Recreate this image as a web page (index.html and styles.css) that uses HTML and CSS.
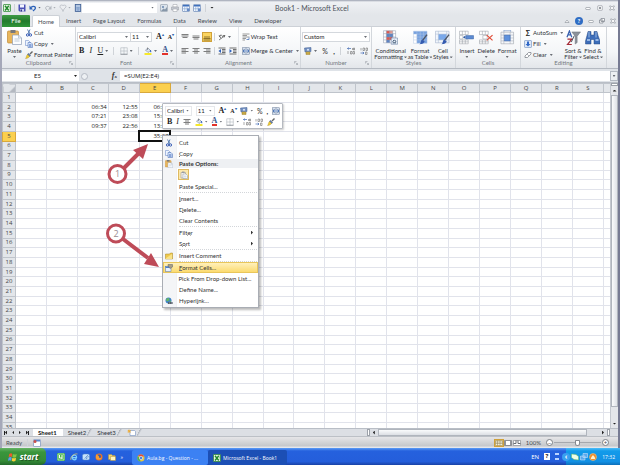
FILE: index.html
```html
<!DOCTYPE html>
<html lang="en">
<head>
<meta charset="utf-8">
<title>Book1 - Microsoft Excel</title>
<link rel="stylesheet" href="styles.css">
</head>
<body>
<svg class="sprite" aria-hidden="true">
  <defs>
    <symbol id="excel" viewBox="0 0 16 16"><rect x="1" y="1" width="14" height="14" rx="1" fill="#e9f5e6" stroke="#2f8b35" stroke-width="1.500"/><path d="M4 3.500L11.500 13M11.500 3.500L4 13" stroke="#218a2b" stroke-width="2.800"/><path d="M12 4h2M12 7h2M12 10h2" stroke="#58a65c"/></symbol>
    <symbol id="save" viewBox="0 0 16 16"><path d="M1 1h14v14H3l-2-2z" fill="#4a50b5"/><path d="M4 1h8v6H4z" fill="#f3f5ff"/><path d="M4 10h8v5H4z" fill="#c9cfee"/><path d="M5 11h3v4H5z" fill="#30368c"/></symbol>
    <symbol id="undo" viewBox="0 0 16 16"><path d="M4 7c5-5 11-1 8 3-1 2-3 3-4 4" fill="none" stroke="#2d62b8" stroke-width="2.600"/><path d="M1 3v8h7z" fill="#2d62b8"/></symbol>
    <symbol id="redo" viewBox="0 0 16 16"><path d="M12 7C7 2 1 6 4 10c1 2 3 3 4 4" fill="none" stroke="#b5bac1" stroke-width="2"/><path d="M15 3v8H8z" fill="#b5bac1"/></symbol>
    <symbol id="shape" viewBox="0 0 16 16"><path d="M2 5c0-3 3-4 6-2 4-2 7 0 6 3-1 2-3 2-4 4l-2 5-2-5C4 9 2 8 2 5z" fill="#eceef1" stroke="#b5bac1" stroke-width="1.500"/></symbol>
    <symbol id="calc" viewBox="0 0 16 16"><rect x="2.500" y="1" width="11" height="14" fill="#7d9cc9" stroke="#3c5c91" stroke-width="1.500"/><path d="M4 3h8v2H4z" fill="#e9f1fb"/><path d="M4 8h8M4 10.500h8M4 13h8" stroke="#d6e3f5" stroke-dasharray="2 1"/></symbol>
    <symbol id="printer" viewBox="0 0 16 16"><path d="M4 1h8v5H4z" fill="#fff" stroke="#989da5"/><path d="M1 6h14v6H1z" fill="#c3c8cf" stroke="#989da5"/><path d="M4 10h8v5H4z" fill="#fff" stroke="#989da5"/></symbol>
    <symbol id="picture" viewBox="0 0 16 16"><rect x="1.500" y="1.500" width="13" height="13" fill="#dbe3ec" stroke="#7b8898"/><circle cx="6" cy="6" r="2" fill="#6685ad"/><path d="M2 14l5-5 3 2 4-5v8z" fill="#8697a9"/></symbol>
    <symbol id="sheetblue" viewBox="0 0 16 16"><rect x="1.500" y="1.500" width="13" height="13" fill="#f3f8ff" stroke="#3c64a4"/><path d="M2 2h12v3H2z" fill="#3f71bd"/><path d="M5.500 5v9M10 5v9M2 9.500h12" stroke="#7296ca"/><path d="M10 9h5v5h-5z" fill="#668bc5"/></symbol>
    <symbol id="macro" viewBox="0 0 16 16"><rect x="1.500" y="1.500" width="13" height="13" fill="#fff" stroke="#5d7fb9"/><path d="M2 2h12v3H2z" fill="#5b86cb"/><circle cx="4" cy="5" r="3" fill="#c9504a"/></symbol>
    <symbol id="paste" viewBox="1 1 14 15"><rect x="1" y="2" width="11" height="12" rx="1" fill="#e9b65c" stroke="#c08937" stroke-width=".7"/><path d="M4 1h5v3H4z" fill="#77797d"/><path d="M6 6h6l3 3v6.500H6z" fill="#fbfdff" stroke="#8c9cb5" stroke-width=".7"/><path d="M12 6v3h3M8 10h5M8 12h5" fill="none" stroke="#a7b6c9" stroke-width=".7"/></symbol>
    <symbol id="pasteplain" viewBox="0 0 16 16"><path d="M2 3h9v11H2z" fill="#f3f0e6" stroke="#8d8f94"/><path d="M4 1h5v3H4z" fill="#9a9ca1"/><path d="M6 6h6l3 3v6H6z" fill="#fff" stroke="#8191a8"/><path d="M8 10h5M8 12h5" stroke="#9fb0c6"/></symbol>
    <symbol id="cut" viewBox="0 0 16 16"><path d="M5 1l5 9M10 1L6 10" stroke="#426da8" stroke-width="1.700"/><circle cx="5" cy="12" r="2.300" fill="none" stroke="#284fb0" stroke-width="1.800"/><circle cx="11" cy="12" r="2.300" fill="none" stroke="#284fb0" stroke-width="1.800"/></symbol>
    <symbol id="copy" viewBox="0 0 16 16"><path d="M1 1h6l3 3v7H1z" fill="#edf4ff" stroke="#5b7fc0"/><path d="M6 5h6l3 3v7H6z" fill="#d5e4fb" stroke="#3961ae"/><path d="M8 9h5M8 11h5M8 13h5" stroke="#3c66b5"/></symbol>
    <symbol id="brush" viewBox="0 0 16 16"><path d="M15 1l-5 5" stroke="#666" stroke-width="2.800"/><path d="M7 4l5 5-3 3-5-5z" fill="#637aa0"/><path d="M5 7l4 4c-2 3-5 4-8 4 2-2 1-5 4-8z" fill="#edcb32" stroke="#a5882b" stroke-width=".7"/></symbol>
    <symbol id="borders" viewBox="0 0 16 16"><path d="M1.500 1.500h13v13h-13zM8 1v14M1 8h14" fill="none" stroke="#a2a8b0"/><path d="M1 14.500h14" stroke="#5c6068"/></symbol>
    <symbol id="fill" viewBox="0 0 16 16"><path d="M3 6l5-4 5 5-5 4z" fill="#dae3ef" stroke="#5c6b81"/><path d="M12 6c3 0 3 3 2 5-2-1-2-3-2-5z" fill="#2d5fb7"/><path d="M7 1v5" stroke="#555"/><path d="M1 12h14v4H1z" fill="#f6e82b"/></symbol>
    <symbol id="left" viewBox="0 0 16 16"><path d="M1 3h14M1 6h9M1 9h14M1 12h9" stroke="#555" stroke-width="1.500"/></symbol>
    <symbol id="center" viewBox="0 0 16 16"><path d="M1 3h14M4 6h8M1 9h14M4 12h8" stroke="#555" stroke-width="1.500"/></symbol>
    <symbol id="right" viewBox="0 0 16 16"><path d="M1 3h14M6 6h9M1 9h14M6 12h9" stroke="#555" stroke-width="1.500"/></symbol>
    <symbol id="top" viewBox="0 0 16 16"><path d="M1 3h14M1 6h14M3 9h10" stroke="#555" stroke-width="1.500"/></symbol>
    <symbol id="middle" viewBox="0 0 16 16"><path d="M1 6h14M1 9h14M3 12h10" stroke="#555" stroke-width="1.500"/></symbol>
    <symbol id="bottom" viewBox="0 0 16 16"><path d="M2 8h12M1 11h14M1 14h14" stroke="#6b5318" stroke-width="1.500"/></symbol>
    <symbol id="orient" viewBox="0 0 16 16"><path d="M2 14L14 5M14 5h-4M14 5l-2 4" stroke="#555" stroke-width="1.500"/><path d="M2 4l4 7M2 8l4-4M6 3l4 5" stroke="#555" stroke-width="1.500"/></symbol>
    <symbol id="outdent" viewBox="0 0 16 16"><path d="M1 2h14M8 5h7M8 8h7M8 11h7M1 14h14" stroke="#444" stroke-width="1.500"/><path d="M6 4v8L1 8z" fill="#2f62bd"/></symbol>
    <symbol id="indent" viewBox="0 0 16 16"><path d="M1 2h14M8 5h7M8 8h7M8 11h7M1 14h14" stroke="#444" stroke-width="1.500"/><path d="M1 4v8l5-4z" fill="#2f62bd"/></symbol>
    <symbol id="wrap" viewBox="0 0 16 16"><path d="M1 2h14M1 5h9M1 8h14M1 11h7M1 14h5" stroke="#666" stroke-width="1.300"/><path d="M14 9v4H9" fill="none" stroke="#3d6ebb" stroke-width="1.500"/></symbol>
    <symbol id="merge" viewBox="0 0 16 16"><rect x="1" y="1.500" width="14" height="13" fill="#e8f0fa" stroke="#627793"/><path d="M1 4.500h14M1 11.500h14M8 1v3M8 12v3" stroke="#627793"/><path d="M2 8h12M5 5.500L2 8l3 2.500M11 5.500L14 8l-3 2.500" stroke="#305fa9" fill="none" stroke-width="1.500"/></symbol>
    <symbol id="money" viewBox="0 0 16 16"><path d="M1 2l13-1v8L2 10z" fill="#7592c3" stroke="#38598f"/><circle cx="8" cy="5.500" r="2" fill="#dce8fa"/><path d="M4 10h8v5H4z" fill="#dfc35b" stroke="#987b27"/><path d="M4 12.500h8" stroke="#987b27"/></symbol>
    <symbol id="decup" viewBox="0 0 16 16"><path d="M8 3H1M3.500 1L1 3l2.500 2" fill="none" stroke="#315fae" stroke-width="1.300"/><path d="M2 8v6M11 2v4M7 9h3v5H7zM12 9h3v5h-3zM13 2h2v4h-2z" fill="none" stroke="#555"/></symbol>
    <symbol id="decdown" viewBox="0 0 16 16"><path d="M1 12h7M5.500 10L8 12l-2.500 2" fill="none" stroke="#315fae" stroke-width="1.300"/><path d="M2 2v5M6 2h3v5H6zM12 2h3v5h-3zM11 10h3v5h-3z" fill="none" stroke="#555"/></symbol>
    <symbol id="cond" viewBox="1 0 31 30"><path d="M2 1h25v25H2z" fill="#fff"/><path d="M8 1h7v6H8zM8 14h12v6H8z" fill="#dd5a52"/><path d="M8 7h14v7H8zM8 20h7v6H8z" fill="#5c83c4"/><path d="M15 1h6v6h-6z" fill="#e59a91"/><path d="M2 1h25v25H2zM8 1v25M15 1v25M21 1v25M2 7h25M2 14h25M2 20h25" fill="none" stroke="#8994aa"/><path d="M18 16h13v13H18z" fill="#e7eff9" stroke="#536d96"/><path d="M21 24l3-4M21 26h7M25 20l3 4" stroke="#304966" stroke-width="2"/></symbol>
    <symbol id="ftable" viewBox="1 0 31 30"><path d="M2 2h28v25H2z" fill="#fff"/><path d="M2 2h28v6H2zM9 8h21v19H9z" fill="#76a1df"/><path d="M2 2h28v25H2zM9 2v25M16 2v25M23 2v25M2 8h28M2 14h28M2 20h28" fill="none" stroke="#b3c6e3"/><path d="M30 9L20 22" stroke="#4d5563" stroke-width="3"/><path d="M20 19l5 4c-2 6-7 6-11 6 4-2 2-7 6-10z" fill="#345bb0"/></symbol>
    <symbol id="cstyle" viewBox="1 0 31 30"><path d="M2 2h28v24H2z" fill="#f2f6fc" stroke="#91a4c2"/><path d="M8 8h17v12H8z" fill="#79a8ea"/><path d="M2 8h28M2 20h28M8 2v24M25 2v24" stroke="#a8b7cf"/><path d="M30 9L20 22" stroke="#4d5563" stroke-width="3"/><path d="M20 19l5 4c-2 6-7 6-11 6 4-2 2-7 6-10z" fill="#345bb0"/></symbol>
    <symbol id="insert" viewBox="1 0 31 30"><path d="M2 2h18v7H2zM2 20h18v8H2zM8 2v7M14 2v7M8 20v8M14 20v8M2 24h18M2 11h7v7H2z" fill="#fff" stroke="#8c929b"/><path d="M15 11h16v7H15z" fill="#5c8bd2" stroke="#315ca1"/><path d="M9 14.500l5-3v6z" fill="#315ca1"/></symbol>
    <symbol id="delete" viewBox="1 0 31 30"><path d="M2 2h18v7H2zM2 20h18v8H2zM8 2v7M14 2v7M8 20v8M14 20v8M2 24h18M9 11h9v7H9z" fill="#fff" stroke="#8c929b"/><path d="M17 10l12 11M29 10L17 21" stroke="#e04b36" stroke-width="2.500"/></symbol>
    <symbol id="format" viewBox="1 0 31 30"><path d="M3 4h26v24H3z" fill="#f5f7fa" stroke="#8c929b"/><path d="M9 4v24M22 4v24M3 10h26M3 22h26M3 16h26" stroke="#9aa4b2"/><path d="M10 10h12v12H10z" fill="#5e91dd" stroke="#315ca1"/><path d="M9 1h14M9 0v3M23 0v3" stroke="#436fae"/></symbol>
    <symbol id="filldown" viewBox="0 0 16 16"><rect x="1.500" y="1.500" width="13" height="13" fill="#dce8f9" stroke="#5076b1"/><path d="M6 3h4v5h3l-5 5-5-5h3z" fill="#2e66c6"/></symbol>
    <symbol id="eraser" viewBox="0 0 16 16"><path d="M2 10l7-7h5v3l-7 7H2z" fill="#fff" stroke="#686d77" stroke-width="1.300"/><path d="M6 6l4 4" stroke="#686d77"/></symbol>
    <symbol id="sort" viewBox="1 0 31 31"><path d="M3 15L8 2l5 13M5 10h6" fill="none" stroke="#365fae" stroke-width="2.500"/><path d="M4 19h9L4 30h9" fill="none" stroke="#a52b36" stroke-width="2.500"/><path d="M13 4h18l-7 9v13l-4 3V13z" fill="#8c929b" stroke="#656c76"/><path d="M18 12L12 25" stroke="#4b525e" stroke-width="2"/></symbol>
    <symbol id="find" viewBox="1 1 30 30"><path d="M7 4h6v7h6V4h6l2 8 4 11v6H19v-9h-6v9H2v-6l3-11z" fill="#3d6db9" stroke="#264983"/><path d="M5 21h6M22 21h6" stroke="#b6d1f2" stroke-width="3"/><path d="M9 5v11M23 5v11" stroke="#9bbce6" stroke-width="2"/></symbol>
    <symbol id="launch" viewBox="0 0 8 8"><path d="M1 5V1h4M3 3l4 4M7 4v3H4" fill="none" stroke="#8c929a"/></symbol>
    <symbol id="min" viewBox="0 0 12 12"><rect x="1.500" y="5" width="9" height="4" rx="1" fill="#fff" stroke="#737983"/></symbol>
    <symbol id="max" viewBox="0 0 12 12"><rect x="1.500" y="1.500" width="9" height="9" rx="1" fill="#fff" stroke="#737983"/><rect x="4.500" y="4.500" width="3" height="3" fill="none" stroke="#737983"/></symbol>
    <symbol id="restore" viewBox="0 0 12 12"><path d="M4 1h7v6H4zM1 4h7v6H1z" fill="#fff" stroke="#737983" stroke-width="1.300"/></symbol>
    <symbol id="close" viewBox="0 0 12 12"><path d="M1 2h3l2 2 2-2h3L8 6l3 4H8L6 8l-2 2H1l3-4z" fill="#fff" stroke="#737983"/></symbol>
    <symbol id="note" viewBox="0 0 16 16"><path d="M1 4h8l2-2h4v12H1z" fill="#efc94c" stroke="#a78524"/><path d="M1 13l13-9v10H1z" fill="#f8e288"/></symbol>
    <symbol id="newsheet" viewBox="0 0 18 14"><path d="M6 3h9l2 2v8H6z" fill="#fff" stroke="#5c7fb6"/><path d="M4 1v7M1 4h7M2 2l5 5M7 2L2 7" stroke="#eea82c" stroke-width="1.500"/></symbol>
    <symbol id="cells" viewBox="0 0 16 16"><rect x="1" y="5" width="11" height="10" fill="#e8f1ff" stroke="#4a6fa8"/><path d="M1 5h11v3H1z" fill="#4d80cb"/><path d="M6 1h9v5l-5 3-4-5z" fill="#a89f86" stroke="#59616d"/></symbol>
    <symbol id="globe" viewBox="0 0 16 16"><circle cx="7" cy="7" r="6" fill="#3e82c9"/><path d="M3 3l5-1 1 4-4 3-3-2zM9 8l3-1-1 5z" fill="#65b665"/><path d="M6 12h9" stroke="#39424e" stroke-width="4"/><path d="M7 12h3M11 12h3" stroke="#dce2e8" stroke-width="1.500"/></symbol>
    <symbol id="windows" viewBox="0 0 16 16"><path d="M2 3q3-2 5 0L6 8q-2-2-5 0z" fill="#ef5b2b"/><path d="M8 3q3 2 6 0l-1 5q-3 2-6 0z" fill="#82c645"/><path d="M1 9q3-2 5 0l-1 5q-2-2-5 0z" fill="#5b9cf1"/><path d="M7 9q3 2 6 0l-1 5q-3 2-6 0z" fill="#fad036"/></symbol>
    <symbol id="green" viewBox="0 0 16 16"><rect width="16" height="16" rx="2" fill="#45b449"/><path d="M2 2h12v12H2z" fill="none" stroke="#fff"/><path d="M5 4v6h5M10 4v8" fill="none" stroke="#fff" stroke-width="2"/></symbol>
    <symbol id="ie" viewBox="0 0 16 16"><path d="M13 11c-5 6-11 0-8-5 3-4 9-1 8 3H5" fill="none" stroke="#7fd0ff" stroke-width="2.500"/><path d="M2 14C-1 9 8 0 15 2" fill="none" stroke="#f4d75d" stroke-width="1.300"/></symbol>
    <symbol id="desktop" viewBox="0 0 16 16"><rect x="1" y="2" width="14" height="12" rx="3" fill="#c7e3fb" stroke="#5487c6"/><path d="M5 11l6-6M11 5l2 3-5 4z" stroke="#3271bf" fill="#fff"/></symbol>
    <symbol id="fox" viewBox="0 0 16 16"><circle cx="8" cy="8" r="7" fill="#eb7426"/><circle cx="8" cy="7" r="4" fill="#3a5cac"/><path d="M2 3c2 1 5 1 6 4 0 4 4 4 6 1-1 6-10 7-12 2z" fill="#f59d35"/></symbol>
    <symbol id="folder" viewBox="0 0 16 16"><path d="M1 3h6l2 2h5v8H1z" fill="#f1d470" stroke="#b48e34"/><path d="M5 7h10v8H5z" fill="#fff4bf" stroke="#b48e34"/></symbol>
    <symbol id="chrome" viewBox="0 0 16 16"><circle cx="8" cy="8" r="7" fill="#e9c840"/><path d="M2 4a7 7 0 0 1 12 1H8z" fill="#e34b3c"/><path d="M2 4l4 6 1 5A7 7 0 0 1 2 4z" fill="#4bad54"/><circle cx="8" cy="8" r="3.300" fill="#4d83df" stroke="#fff"/></symbol>
    <symbol id="leaf" viewBox="0 0 16 16"><path d="M1 2l9 1 5 4v7l-9-1-5-4z" fill="#edfce8" stroke="#63b85e"/></symbol>
    <symbol id="net" viewBox="0 0 16 16"><path d="M6 1h9v8H6zM1 6h9v8H1z" fill="#5aa9ee" stroke="#dcecff"/></symbol>
    <symbol id="flame" viewBox="0 0 16 16"><circle cx="8" cy="8" r="7" fill="#ed8b28" stroke="#ffce8b"/><path d="M4 9l4-5 4 5v3H4z" fill="#fff1cc"/></symbol>
    <symbol id="view" viewBox="0 0 16 12"><path d="M1 1h14v10H1zM5 1v10M10 1v10M1 4h14M1 7h14" fill="#f6f0d6" stroke="#8b7c55"/></symbol>
    <symbol id="page" viewBox="0 0 16 12"><path d="M1 1h14v10H1z" fill="#929599" stroke="#696d72"/><path d="M4 2h8v8H4z" fill="#fff"/></symbol>
    <symbol id="break" viewBox="0 0 16 12"><path d="M1 1h14v10H1z" fill="#fff" stroke="#696d72"/><path d="M6 1v6H1M10 1v6h5" fill="none" stroke="#696d72" stroke-width="2"/></symbol>
  </defs>
</svg>

<div class="app">
  <div class="window">
  <header class="titlebar">
    <div class="qat">
      <svg class="ic"><use href="#excel"/></svg><i class="bar"></i>
      <button aria-label="Save"><svg class="ic"><use href="#save"/></svg></button>
      <button aria-label="Undo"><svg class="ic"><use href="#undo"/></svg><i class="dd"></i></button>
      <button aria-label="Redo"><svg class="ic"><use href="#redo"/></svg><i class="dd pale"></i></button>
      <button aria-label="Shapes"><svg class="ic"><use href="#shape"/></svg><i class="dd pale"></i></button>
      <button aria-label="Calculator"><svg class="ic"><use href="#calc"/></svg></button>
    </div>
    <span class="pick quick"><select aria-label="Quick list"><option></option></select></span>
    <div class="qat second">
      <button aria-label="Picture"><svg class="ic"><use href="#picture"/></svg></button>
      <button aria-label="Print"><svg class="ic"><use href="#printer"/></svg></button>
      <button aria-label="Form"><svg class="ic"><use href="#sheetblue"/></svg></button>
      <button aria-label="Table"><svg class="ic"><use href="#sheetblue"/></svg></button>
      <i class="bar"></i><i class="dd dark"></i>
    </div>
    <h1>Book1 - Microsoft Excel</h1>
    <div class="wincontrols">
      <button aria-label="Minimize"><svg class="wc"><use href="#min"/></svg></button>
      <button aria-label="Maximize"><svg class="wc"><use href="#max"/></svg></button>
      <button aria-label="Close"><svg class="wc"><use href="#close"/></svg></button>
    </div>
  </header>

  <nav class="tabs">
    <button class="file">File</button>
    <button class="active">Home</button>
    <button>Insert</button><button>Page Layout</button><button>Formulas</button><button>Data</button><button>Review</button><button>View</button><button>Developer</button>
    <div class="doccontrols">
      <button aria-label="Collapse ribbon"><svg class="wc" viewBox="0 0 12 12"><path d="M2 9l4-5 4 5z" fill="#fff" stroke="#737983"/></svg></button>
      <button class="help">?</button>
      <button aria-label="Minimize workbook"><svg class="wc"><use href="#min"/></svg></button>
      <button aria-label="Restore workbook"><svg class="wc"><use href="#restore"/></svg></button>
      <button aria-label="Close workbook"><svg class="wc"><use href="#close"/></svg></button>
    </div>
  </nav>

  <section class="ribbon">
    <div class="group">
      <div class="body clip">
        <button class="big"><svg class="bigic"><use href="#paste"/></svg><span>Paste</span><i class="dd"></i></button>
        <div class="three">
          <button><svg class="ic"><use href="#cut"/></svg>Cut</button>
          <button><svg class="ic"><use href="#copy"/></svg>Copy<i class="dd"></i></button>
          <button><svg class="ic"><use href="#brush"/></svg>Format Painter</button>
        </div>
      </div>
      <footer>Clipboard<svg class="la"><use href="#launch"/></svg></footer>
    </div>
    <div class="group">
      <div class="body two">
        <div class="line">
          <span class="pick font"><select aria-label="Font"><option>Calibri</option></select></span><span class="pick size"><select aria-label="Font size"><option>11</option></select></span>
          <button class="glyph grow">A<sup>▴</sup></button><button class="glyph shrink">A<sup>▾</sup></button>
        </div>
        <div class="line spread">
          <button class="glyph"><b>B</b></button><button class="glyph"><em>I</em></button><button class="glyph"><u>U</u><i class="dd"></i></button><i class="bar"></i>
          <button aria-label="Borders"><svg class="ic"><use href="#borders"/></svg><i class="dd"></i></button><i class="bar"></i>
          <button aria-label="Fill color"><svg class="ic"><use href="#fill"/></svg><i class="dd"></i></button>
          <button class="glyph"><span class="red">A</span><i class="dd"></i></button>
        </div>
      </div>
      <footer>Font<svg class="la"><use href="#launch"/></svg></footer>
    </div>
    <div class="group">
      <div class="body align">
        <div class="two">
          <div class="line"><button aria-label="Top align"><svg class="ic"><use href="#top"/></svg></button><button aria-label="Middle align"><svg class="ic"><use href="#middle"/></svg></button><button class="on" aria-label="Bottom align"><svg class="ic"><use href="#bottom"/></svg></button><i class="bar"></i><button aria-label="Orientation"><svg class="ic"><use href="#orient"/></svg><i class="dd"></i></button></div>
          <div class="line"><button aria-label="Align left"><svg class="ic"><use href="#left"/></svg></button><button aria-label="Center"><svg class="ic"><use href="#center"/></svg></button><button aria-label="Align right"><svg class="ic"><use href="#right"/></svg></button><i class="bar"></i><button aria-label="Decrease indent"><svg class="ic"><use href="#outdent"/></svg></button><button aria-label="Increase indent"><svg class="ic"><use href="#indent"/></svg></button></div>
        </div>
        <div class="two wraps">
          <div class="line"><button><svg class="ic"><use href="#wrap"/></svg>Wrap Text</button></div>
          <div class="line"><button><svg class="ic"><use href="#merge"/></svg>Merge &amp; Center<i class="dd"></i></button></div>
        </div>
      </div>
      <footer>Alignment<svg class="la"><use href="#launch"/></svg></footer>
    </div>
    <div class="group">
      <div class="body two">
        <div class="line"><span class="pick number"><select aria-label="Number format"><option>Custom</option></select></span></div>
        <div class="line spread"><button aria-label="Currency"><svg class="ic"><use href="#money"/></svg><i class="dd"></i></button><button class="sym">%</button><button class="sym"><b>,</b></button><i class="bar"></i><button aria-label="Increase decimal"><svg class="ic"><use href="#decup"/></svg></button><button aria-label="Decrease decimal"><svg class="ic"><use href="#decdown"/></svg></button></div>
      </div>
      <footer>Number<svg class="la"><use href="#launch"/></svg></footer>
    </div>
    <div class="group">
      <div class="body bigs">
        <button class="big"><svg class="bigic"><use href="#cond"/></svg><span>Conditional<br>Formatting<i class="dd"></i></span></button>
        <button class="big"><svg class="bigic"><use href="#ftable"/></svg><span>Format<br>as Table<i class="dd"></i></span></button>
        <button class="big"><svg class="bigic"><use href="#cstyle"/></svg><span>Cell<br>Styles<i class="dd"></i></span></button>
      </div>
      <footer>Styles</footer>
    </div>
    <div class="group">
      <div class="body bigs">
        <button class="big"><svg class="bigic"><use href="#insert"/></svg><span>Insert</span><i class="dd"></i></button>
        <button class="big"><svg class="bigic"><use href="#delete"/></svg><span>Delete</span><i class="dd"></i></button>
        <button class="big"><svg class="bigic"><use href="#format"/></svg><span>Format</span><i class="dd"></i></button>
      </div>
      <footer>Cells</footer>
    </div>
    <div class="group">
      <div class="body edit">
        <div class="three">
          <button><b class="sigma">Σ</b>AutoSum<i class="dd"></i></button>
          <button><svg class="ic"><use href="#filldown"/></svg>Fill<i class="dd"></i></button>
          <button><svg class="ic"><use href="#eraser"/></svg>Clear<i class="dd"></i></button>
        </div>
        <button class="big"><svg class="bigic"><use href="#sort"/></svg><span>Sort &amp;<br>Filter<i class="dd"></i></span></button>
        <button class="big"><svg class="bigic"><use href="#find"/></svg><span>Find &amp;<br>Select<i class="dd"></i></span></button>
      </div>
      <footer>Editing</footer>
    </div>
  </section>

  <div class="formulabar">
    <span class="pick name"><select aria-label="Name box"><option>E5</option></select></span>
    <div class="fx"><i class="knob"></i><button>f<sub>x</sub></button></div>
    <input aria-label="Formula" value="=SUM(E2:E4)">
    <button class="expand" aria-label="Expand formula bar"><i class="dd"></i></button>
  </div>

  <main class="sheet">
    <div class="gridwrap"><table id="grid"></table></div>
    <div class="vscroll"><i class="split"></i><button aria-label="Scroll up"><i class="up"></i></button><i class="thumb"></i><button aria-label="Scroll down"><i class="dd dark"></i></button></div>
  </main>

  <div class="sheettabs">
    <div class="navs"><button class="first" aria-label="First sheet"><i class="prev"></i></button><button aria-label="Previous sheet"><i class="prev"></i></button><button aria-label="Next sheet"><i class="next"></i></button><button class="last" aria-label="Last sheet"><i class="next"></i></button></div>
    <button class="tab current">Sheet1</button><button class="tab">Sheet2</button><button class="tab">Sheet3</button>
    <button class="tab" aria-label="Insert worksheet"><svg class="ic small"><use href="#newsheet"/></svg></button>
    <div class="hscroll"><i class="split"></i><button aria-label="Scroll left"><i class="prev"></i></button><i class="thumb"></i><button aria-label="Scroll right"><i class="next"></i></button><i class="split"></i></div>
  </div>

  <div class="status">
    <span>Ready</span><i class="bar"></i><svg class="ic"><use href="#macro"/></svg>
    <div class="views"><button class="on" aria-label="Normal"><svg class="vi"><use href="#view"/></svg></button><button aria-label="Page layout"><svg class="vi"><use href="#page"/></svg></button><button aria-label="Page break"><svg class="vi"><use href="#break"/></svg></button></div>
    <span class="pct">100%</span>
    <div class="zoomer"><button class="round">−</button><input type="range" aria-label="Zoom" value="50"><button class="round">+</button></div>
  </div>
  </div>

  <div class="taskbar">
    <button class="start"><svg class="flag"><use href="#windows"/></svg>start</button>
    <div class="launch">
      <svg class="ic"><use href="#green"/></svg><svg class="ic"><use href="#ie"/></svg><svg class="ic"><use href="#desktop"/></svg><svg class="ic"><use href="#fox"/></svg><svg class="ic"><use href="#folder"/></svg><span>»</span>
    </div>
    <button class="task"><svg class="ic"><use href="#chrome"/></svg>Aula.bg - Question - ...</button>
    <button class="task pressed"><svg class="ic"><use href="#excel"/></svg>Microsoft Excel - Book1</button>
    <div class="lang"><span>EN</span><b>?</b><i class="dots"></i></div>
    <div class="tray"><i class="chev">‹</i><svg class="ic"><use href="#leaf"/></svg><svg class="ic"><use href="#net"/></svg><svg class="ic"><use href="#flame"/></svg><span>17:32</span></div>
  </div>

  <div class="mini">
    <div class="line"><span class="pick mf"><select aria-label="Mini font"><option>Calibri</option></select></span><span class="pick ms"><select aria-label="Mini size"><option>11</option></select></span><button class="glyph grow">A<sup>▴</sup></button><button class="glyph shrink">A<sup>▾</sup></button><button aria-label="Currency style"><svg class="ic"><use href="#money"/></svg><i class="dd"></i></button><button class="sym">%</button><button class="sym"><b>,</b></button><button aria-label="Merge"><svg class="ic"><use href="#merge"/></svg></button></div>
    <div class="line tools"><button class="glyph"><b>B</b></button><button class="glyph"><em>I</em></button><button aria-label="Center text"><svg class="ic"><use href="#center"/></svg></button><button aria-label="Fill"><svg class="ic"><use href="#fill"/></svg><i class="dd"></i></button><button class="glyph"><span class="red">A</span><i class="dd"></i></button><button aria-label="Border"><svg class="ic"><use href="#borders"/></svg><i class="dd"></i></button><button aria-label="More decimals"><svg class="ic"><use href="#decup"/></svg></button><button aria-label="Fewer decimals"><svg class="ic"><use href="#decdown"/></svg></button><button aria-label="Painter"><svg class="ic"><use href="#brush"/></svg></button></div>
  </div>

  <div class="menu" role="menu">
    <button><svg class="ic"><use href="#cut"/></svg><span>Cu<u>t</u></span></button>
    <button><svg class="ic"><use href="#copy"/></svg><span><u>C</u>opy</span></button>
    <div class="head"><svg class="ic"><use href="#paste"/></svg><b>Paste Options:</b></div>
    <div class="opts"><button aria-label="Paste"><svg class="ic"><use href="#pasteplain"/></svg></button></div>
    <button><i></i><span>Paste <u>S</u>pecial...</span></button>
    <hr>
    <button><i></i><span><u>I</u>nsert...</span></button>
    <button><i></i><span><u>D</u>elete...</span></button>
    <button><i></i><span>Clear Co<u>n</u>tents</span></button>
    <hr>
    <button><i></i><span>Filt<u>e</u>r</span><i class="sub"></i></button>
    <button><i></i><span>S<u>o</u>rt</span><i class="sub"></i></button>
    <hr>
    <button><svg class="ic"><use href="#note"/></svg><span>Insert Co<u>m</u>ment</span></button>
    <hr>
    <button class="hot"><svg class="ic"><use href="#cells"/></svg><span><u>F</u>ormat Cells...</span></button>
    <button><i></i><span>Pic<u>k</u> From Drop-down List...</span></button>
    <button><i></i><span>Define N<u>a</u>me...</span></button>
    <button><svg class="ic"><use href="#globe"/></svg><span>Hyperl<u>i</u>nk...</span></button>
  </div>

  <svg class="notes" width="70" height="140" viewBox="100 135 70 140">
    <g fill="none" stroke="#be4b58" stroke-width="4"><path d="M124 168l16-16M123 239l25 19"/><circle cx="117.500" cy="174" r="8.500" fill="#fff" stroke-width="3"/><circle cx="116" cy="233.500" r="8.500" fill="#fff" stroke-width="3"/></g>
    <path d="M148 144l-5 15-10-9zM159 267l-15-3 7-11z" fill="#be4b58"/>
    <text x="117.500" y="177">1</text><text x="116" y="237">2</text>
  </svg>
</div>
<script src="grid.js"></script>
</body>
</html>
```
FILE: styles.css
```css
* { box-sizing: border-box; }
body { margin: 0; font-family: Lato, "Open Sans", sans-serif; font-size: 6px; line-height: 6px; color: #2f333a; }
button, select, input { font: inherit; color: inherit; margin: 0; padding: 0; border: 0; background: none; }
button { display: inline-flex; align-items: center; justify-content: center; white-space: nowrap; }
.sprite { display: none; }
svg { display: block; flex: none; }
.ic { width: 8px; height: 8px; }
.wc { width: 6px; height: 6px; }
.vi { width: 8px; height: 6px; }
.dd { display: inline-block; flex: none; width: 3px; height: 2px; margin-left: 2px; background: #6a6e75; clip-path: polygon(0 0, 100% 0, 50% 100%); vertical-align: middle; }
.dd.dark { width: 4px; background: #222; }
.dd.pale { background: #a9adb3; }
.bar { width: 1px; height: 8px; background: #cfd3d8; flex: none; }
.prev, .next { width: 2px; height: 4px; background: #222; clip-path: polygon(100% 0, 100% 100%, 0 50%); }
.next { clip-path: polygon(0 0, 100% 50%, 0 100%); }

.app { position: relative; display: flex; flex-direction: column; height: 100vh; overflow: hidden; background: #dfe3e8; }
.window { flex: 1; min-height: 0; display: flex; flex-direction: column; border: solid #9296ab; border-width: 0 2px; border-right-color: #777b93; border-left-color: #a5a8b9; }

.titlebar { display: flex; align-items: center; height: 15px; padding: 0 3px 0 1px; background: linear-gradient(#9ba1b0 0, #eff1f4 2px, #e3e6ea); }
.qat { display: flex; align-items: center; gap: 3px; width: 79px; }
.qat .bar { margin: 0; }
.qat .dd { margin-left: 1px; }
.second { width: auto; margin-left: 3px; }
.second .bar { margin: 0 0 0 1px; }
.titlebar h1 { flex: 1; margin: 0; padding-left: 61px; font-size: 7px; font-weight: 400; line-height: 10px; color: #4d525a; white-space: nowrap; }
.wincontrols { display: flex; gap: 6px; }

.pick { position: relative; display: block; flex: none; height: 10px; background: #fff; border: 1px solid #d4d8dd; }
.pick select { display: block; appearance: none; width: 100%; height: 8px; padding-left: 1px; color: #222; }
.pick::after { content: ""; position: absolute; right: 2px; top: 3px; width: 3px; height: 2px; background: #6a6e75; clip-path: polygon(0 0, 100% 0, 50% 100%); pointer-events: none; }
.quick { width: 75px; border-color: #fff; }

.tabs { display: flex; height: 12px; background: #e3e6ea; border-bottom: 1px solid #cdd1d7; }
.tabs > button { padding: 0 6px; height: 12px; color: #454a52; }
.tabs .file { width: 28px; margin-right: 2px; background: linear-gradient(#3f9b45, #227a2c 50%, #2f9538); color: #fff; border-radius: 1px 1px 0 0; }
.tabs .active { background: #fff; border: 1px solid #cdd1d7; border-bottom: 0; padding: 0 5px; border-radius: 2px 2px 0 0; }
.doccontrols { display: flex; align-items: center; gap: 5px; margin-left: auto; padding-right: 2px; }
.doccontrols .help { width: 8px; height: 8px; border-radius: 50%; background: #2f6dc4; color: #fff; font-weight: 700; }

.ribbon { display: grid; grid-template-columns: 74fr 101fr 124fr 71fr 84fr 65fr 86fr 11fr; height: 42px; background: linear-gradient(#fff, #f4f6f8 60%, #e3e6ea); border-bottom: 1px solid #b4b9c1; }
.group { display: flex; flex-direction: column; min-width: 0; border-right: 1px solid #d3d7dc; }
.body { flex: 1; min-height: 0; }
.group footer { position: relative; height: 8px; line-height: 6px; text-align: center; color: #747981; }
.la { position: absolute; right: 2px; top: 1px; width: 4px; height: 4px; }
.clip { display: flex; gap: 3px; padding-left: 5px; }
.three { display: flex; flex-direction: column; align-items: flex-start; gap: 1px; padding-top: 1px; }
.three button { height: 10px; gap: 1px; }
.three .dd { margin-left: 2px; }
.two { display: flex; flex-direction: column; gap: 4px; padding: 5px 1px 0; }
.line { display: flex; align-items: center; height: 10px; }
.spread { justify-content: space-between; padding: 0 2px; }
.font { width: 54px; }
.size { width: 21px; border-left: 0; }
.number { width: 100%; }
.glyph { font-family: "Liberation Serif", serif; font-size: 8px; line-height: 8px; color: #222; }
.glyph b { font-weight: 700; }
.grow, .shrink { font-weight: 700; margin-left: 4px; }
.shrink { font-size: 6px; }
.glyph sup { font-size: 4px; line-height: 4px; align-self: flex-start; color: #3867b0; }
.red { border-bottom: 2px solid #e2332b; line-height: 6px; font-weight: 700; color: #35558d; }
.sym { font-size: 7px; color: #333; }
.align { display: flex; }
.align .two:first-child { width: 53%; padding: 5px 0 0 4px; }
.align .line { gap: 3px; }
.wraps { padding-left: 3px; border-left: 1px solid #e3e6ea; }
.wraps button { gap: 1px; }
.on { background: #fbd460; outline: 1px solid #d0a13a; }
.big { flex-direction: column; justify-content: flex-start; padding-top: 3px; line-height: 6px; }
.big span { margin-top: 3px; }
.big > .dd { margin: 2px 0 0; }
.big span .dd { margin-left: 1px; }
.bigic { width: 15px; height: 15px; }
.bigs { display: flex; justify-content: space-around; padding: 0 2px; }
.edit { display: flex; justify-content: space-between; padding: 0 3px; }
.sigma { width: 8px; font-size: 7px; color: #222; }

.formulabar { display: flex; height: 14px; padding: 2px 0 1px; background: #dfe3e8; border-bottom: 1px solid #b9bec6; }
.name { width: 77px; border: 0; }
.name select { padding-left: 32px; height: 10px; }
.name::after { top: 4px; background: #222; }
.fx { display: flex; justify-content: space-between; align-items: center; width: 41px; padding: 0 3px 0 2px; }
.knob { width: 7px; height: 7px; border: 1px solid #b4bac3; border-radius: 50%; background: #edf0f3; }
.fx button { font: italic 700 8px/8px "Liberation Serif", serif; color: #333; }
.fx sub { font-size: 5px; line-height: 5px; }
.formulabar input { flex: 1; min-width: 0; padding-left: 4px; background: #fff; font-family: "Open Sans", sans-serif; color: #222; }
.expand { width: 8px; border: 1px solid #b4bac3; background: #eceff2; }
.expand .dd { margin: 0; }

.sheet { flex: 1; min-height: 0; display: flex; background: #dfe3e8; }
.gridwrap { flex: 1; min-width: 0; overflow: hidden; background: #fff; }
#grid { table-layout: fixed; width: 633px; height: calc(100% + 5px); border-collapse: collapse; font-family: "Open Sans", sans-serif; line-height: 7px; color: #222; }
#grid th, #grid td { padding: 0; border: 1px solid #e1e3eb; overflow: hidden; white-space: nowrap; }
#grid td { text-align: right; padding-right: 1px; }
#grid th { background: #e3e6ea; border-color: #bfc4cb; font-weight: 400; color: #444; text-align: center; }
#grid thead th { height: 9px; }
#grid th.sel { background: #fbd04f; border-color: #d8a83c; }
#grid td.cur { outline: 2px solid #111; outline-offset: -1px; }
#grid .rowhead { width: 13px; background: linear-gradient(135deg, #e3e6ea 65%, #b4b9c1 66%); }
.vscroll { display: flex; flex-direction: column; width: 8px; background: #e4e6ea; border-left: 1px solid #c4c8cf; }
.vscroll button { height: 9px; }
.vscroll .dd { margin: 0; }
.vscroll .split { height: 3px; border: 1px solid #9da2aa; background: #fff; }
.vscroll .thumb { flex: 1; border: 1px solid #b0b5bd; background: linear-gradient(90deg, #fafbfc, #dfe2e7); margin-bottom: 12px; }
.up { width: 4px; height: 2px; background: #333; clip-path: polygon(50% 0, 100% 100%, 0 100%); }

.sheettabs { display: flex; height: 8px; padding-right: 8px; background: #dcdfe4; border-top: 1px solid #b9bec6; }
.navs { display: flex; width: 31px; justify-content: space-between; padding: 0 4px 0 2px; }
.first, .last { padding: 0 1px; background: linear-gradient(#222, #222) 0 50% / 1px 4px no-repeat; }
.last { background-position: 100% 50%; }
.tab { padding: 0 6px 0 5px; background: linear-gradient(120deg, transparent calc(100% - 5px), #aeb3bb calc(100% - 5px), transparent calc(100% - 3px)); }
.current { background: #fff; font-weight: 700; color: #222; }
.small { width: 9px; height: 7px; }
.hscroll { display: flex; width: 40%; margin-left: auto; align-items: stretch; gap: 3px; }
.hscroll .thumb { flex: 1; border: 1px solid #b0b5bd; background: linear-gradient(#fafbfc, #dcdfe4); margin-right: 12px; }
.hscroll .split { width: 3px; border: 1px solid #9da2aa; background: #fff; }

.status { display: flex; align-items: center; height: 12px; padding: 0 9px 0 4px; gap: 5px; background: linear-gradient(#e6e6e8, #c6c8cb 80%, #eef0f4); border-top: 1px solid #bcc0c6; color: #4a4d52; }
.views { display: flex; gap: 1px; margin-left: auto; }
.zoomer { display: flex; align-items: center; gap: 1px; }
.status .round { width: 7px; height: 7px; border: 1px solid #7b7f85; border-radius: 50%; background: #fff; line-height: 5px; }
.status input { appearance: none; width: 47px; height: 8px; background: linear-gradient(#a5a8ad, #a5a8ad) center / 100% 1px no-repeat; }
.status input::-webkit-slider-thumb { appearance: none; width: 5px; height: 6px; border: 1px solid #85898f; border-radius: 1px 1px 3px 3px; background: #fff; }

.taskbar { display: flex; align-items: stretch; height: 17px; background: linear-gradient(#5c9cf5, #2561de 3px, #245edb 80%, #1941a5); color: #fff; font-family: "Open Sans", sans-serif; font-size: 5px; }
.start { width: 46px; gap: 2px; border-radius: 0 5px 5px 0; background: linear-gradient(#67b365, #3a963c 4px, #358c37 75%, #23692a); font: italic 700 8px/10px "Open Sans", sans-serif; color: #fff; text-shadow: 1px 1px 1px #1b4e1e; }
.flag { width: 10px; height: 10px; }
.launch { display: flex; align-items: center; justify-content: space-between; width: 86px; padding: 0 9px 0 11px; }
.task { width: 76px; justify-content: flex-start; gap: 2px; padding-left: 5px; margin-top: 2px; background: #3c81f3; border-radius: 2px; }
.pressed { width: 79px; background: #1c4fb5; }
.lang { display: flex; align-items: center; gap: 5px; margin-left: auto; padding-right: 7px; font-size: 6px; }
.lang b { width: 6px; height: 7px; background: #fff; color: #222; text-align: center; }
.dots { width: 4px; height: 8px; background: linear-gradient(#bcd4ff 2px, transparent 2px 5px, #bcd4ff 5px 7px, transparent 7px); }
.tray { display: flex; align-items: center; gap: 1px; width: 54px; padding-right: 5px; background: linear-gradient(#4fbdf8, #129bea 3px, #1290e4 80%, #0d6fb9); }
.tray span { margin-left: auto; font-size: 5px; }
.chev { flex: none; width: 8px; height: 8px; margin-left: -4px; border-radius: 50%; background: #3aa0f0; text-align: center; font: 700 7px/7px "Open Sans", sans-serif; }

.mini { position: absolute; left: 162px; top: 103px; width: 121px; padding: 1px 2px; background: #fff; border: 1px solid #b6bac1; border-radius: 1px; box-shadow: 1px 1px 2px #0003; }
.mini .line { height: 11px; justify-content: space-between; }
.mini .tools { padding: 0 5px 0 2px; }
.mini .grow, .mini .shrink { margin: 0; }
.mini .pick { border-color: #e6e8eb; }
.mf { width: 27px; }
.ms { width: 19px; }

.menu { position: absolute; left: 162px; top: 135px; width: 97px; padding: 1px 0; background: linear-gradient(90deg, #f4f5f7 13px, #e1e3e7 13px, #fff 14px); border: 1px solid #a9adb4; box-shadow: 2px 2px 2px #0004; color: #333; }
.menu > button { display: grid; grid-template-columns: 16px 1fr 4px; width: 100%; height: 11px; padding-right: 3px; text-align: left; }
.menu u { text-decoration-thickness: 1px; text-underline-offset: 0; text-decoration-color: #777; }
.menu .ic { margin-left: 2px; }
.menu hr { height: 1px; margin: 0 1px 0 16px; border: 0; border-top: 1px dotted #d3d6da; }
.head { display: grid; grid-template-columns: 16px 1fr; align-items: center; height: 9px; background: #eef0f3; }
.opts { height: 13px; padding: 1px 0 0 15px; }
.opts button { width: 11px; height: 11px; background: #fbe8ad; border: 1px solid #dfba60; }
.opts .ic { margin: 0; }
.menu .hot { background: linear-gradient(#fff3c4, #fbd867); box-shadow: inset 0 0 0 1px #e9c65a; }
.sub { width: 2px; height: 4px; background: #333; clip-path: polygon(0 0, 100% 50%, 0 100%); }

.notes { position: absolute; left: 100px; top: 135px; pointer-events: none; }
.notes text { font: 9px "Open Sans", sans-serif; text-anchor: middle; fill: #9a8b91; }
```
FILE: grid.js
```js
const columns = 'ABCDEFGHIJKLMNOPQRST'.split('');
const values = {
  C2: '06:34', D2: '12:55', E2: '06:21',
  C3: '07:21', D3: '23:08', E3: '15:47',
  C4: '09:37', D4: '22:56', E4: '13:19',
  E5: '35:27'
};
const head = columns.map(c => `<th class="${c === 'E' ? 'sel' : ''}">${c === 'T' ? '' : c}</th>`).join('');
let html = `<thead><tr><th class="rowhead"></th>${head}</tr></thead><tbody>`;
for (let r = 1; r <= 35; r++) {
  const cells = columns.map(c => `<td class="${c + r === 'E5' ? 'cur' : ''}">${values[c + r] || ''}</td>`).join('');
  html += `<tr><th class="${r === 5 ? 'sel' : ''}">${r}</th>${cells}</tr>`;
}
document.getElementById('grid').innerHTML = html + '</tbody>';
```
